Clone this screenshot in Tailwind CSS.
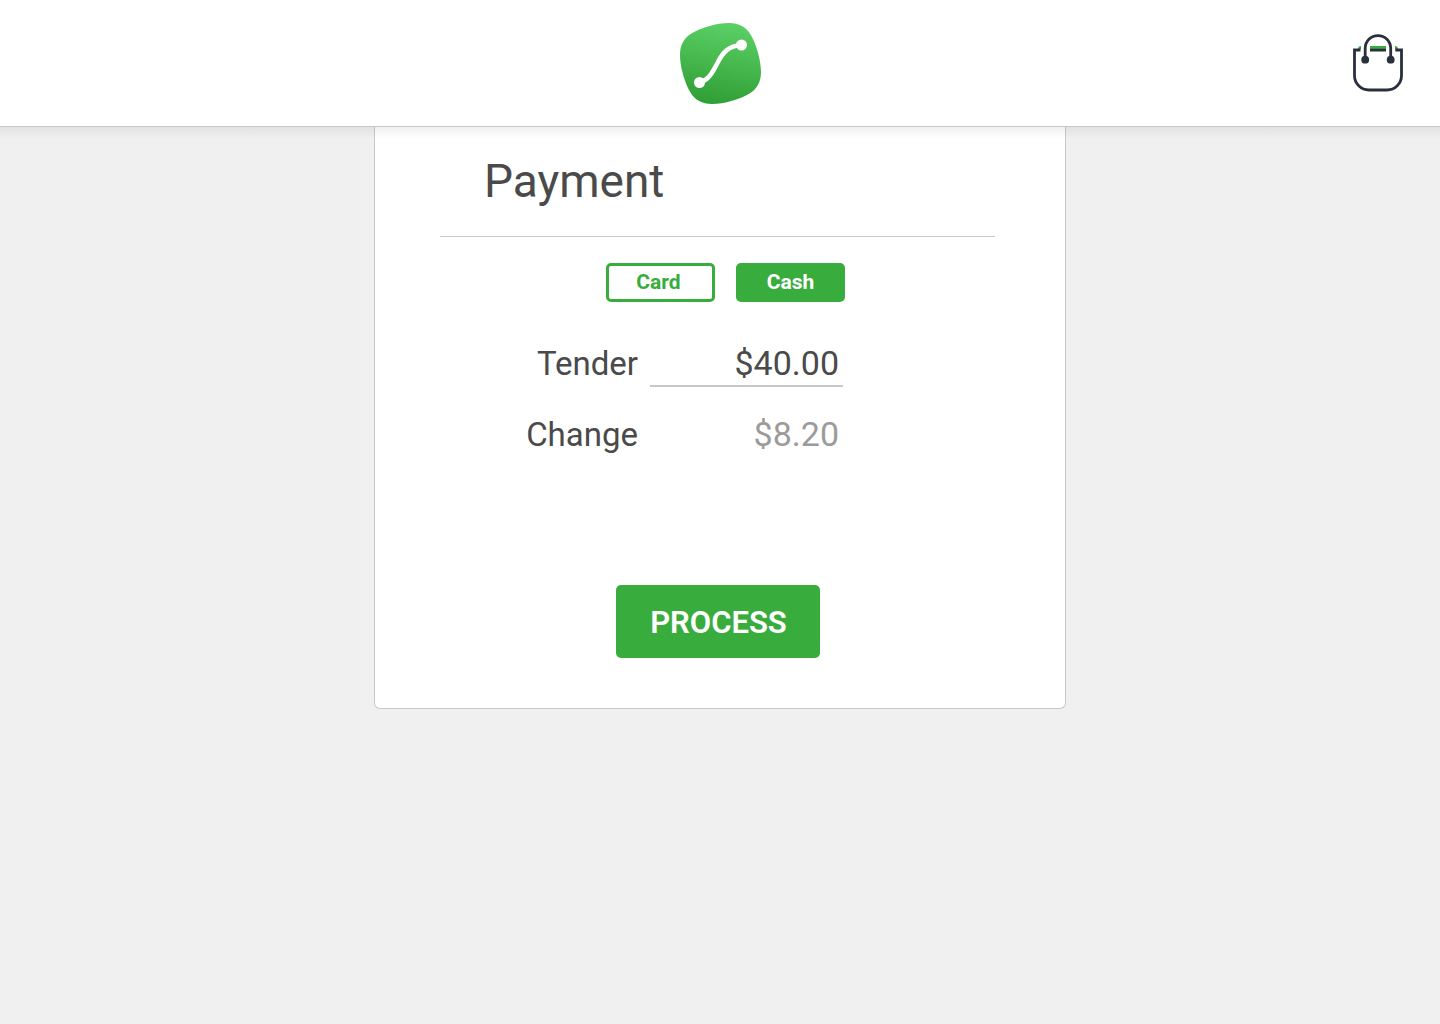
<!DOCTYPE html>
<html lang="en">
<head>
<meta charset="utf-8">
<meta name="viewport" content="width=device-width, initial-scale=1">
<title>Payment</title>
<script src="https://cdn.jsdelivr.net/npm/@tailwindcss/browser@4"></script>
</head>
<body class="min-h-screen bg-[#f0f0f0] font-[Roboto,sans-serif] text-[#4a4a4a]">
  <header class="sticky top-0 z-10 grid h-[127px] grid-cols-3 items-center border-b border-[#c8c8c8] bg-white px-[37px]">
    <a href="#" aria-label="Home" class="col-start-2 justify-self-center">
      <svg width="82" height="82" viewBox="-1 -1 82 82" fill="none" aria-hidden="true">
        <defs>
          <linearGradient id="leaf" x1="48" y1="0" x2="34" y2="81" gradientUnits="userSpaceOnUse">
            <stop stop-color="#5bd066"/>
            <stop offset="1" stop-color="#309f35"/>
          </linearGradient>
        </defs>
        <path fill="url(#leaf)" d="M11.500 10.500C20 5 37 0 49 0C59 0 66 4 70.500 11.500C76 20 81 37 81 49C81 59 77 66 69.500 70.500C61 76 44 81 32 81C22 81 15 77 10.500 69.500C5 61 0 44 0 32C0 22 4 15 11.500 10.500Z"/>
        <path d="M19.500 59.500C30 57 34 46 38 39C43 29 49 23 61 22" stroke="#fff" stroke-width="4.500"/>
        <circle cx="19.500" cy="59.500" r="5.500" fill="#fff"/>
        <circle cx="61.500" cy="22" r="5.500" fill="#fff"/>
      </svg>
    </a>
    <button type="button" aria-label="Shopping bag" class="justify-self-end">
      <svg width="50" height="58" viewBox="0 0 50 58" fill="none" aria-hidden="true">
        <path d="M5 15a3 3 0 0 1 3-3v3zM17 12h16v3H17zM42 12a3 3 0 0 1 3 3h-3z" fill="#39ac3e"/>
        <path d="M7.500 16H1.500V41.500A14.500 14.500 0 0 0 16 56H34A14.500 14.500 0 0 0 48.500 41.500V16H42.300M17 16.200H33" stroke="#2a303b" stroke-width="2.800"/>
        <path d="M12.200 25.700V14.300A12.750 12.750 0 0 1 37.700 14.300V25.700" stroke="#2a303b" stroke-width="2.800"/>
        <circle cx="12.200" cy="25.700" r="3.900" fill="#2a303b"/>
        <circle cx="37.700" cy="25.700" r="3.900" fill="#2a303b"/>
      </svg>
    </button>
    <div class="pointer-events-none absolute inset-x-0 top-full mt-px h-3 bg-linear-to-b from-black/6 to-transparent"></div>
  </header>

  <main class="mx-auto w-full max-w-[692px] rounded-b-md border border-t-0 border-[#c8c8c8] bg-white pt-[26px] pr-[70px] pb-[50px] pl-[65px]">
    <h1 class="border-b border-[#c8c8c8] pb-[27px] pl-11 text-[46px] leading-[56px]">Payment</h1>
    <form>
      <div class="max-w-[405px]">
        <div class="mt-[26px] flex justify-end gap-[21px]">
          <button type="button" class="h-[39px] w-[109px] rounded-[5px] border-3 border-[#39ac3e] bg-white pr-1 pb-0.5 text-[21px] leading-6 font-bold text-[#39ac3e]">Card</button>
          <button type="button" aria-pressed="true" class="h-[39px] w-[109px] rounded-[5px] border-3 border-[#39ac3e] bg-[#39ac3e] pb-0.5 text-[21px] leading-6 font-bold text-white">Cash</button>
        </div>
        <div class="mt-[41px] grid grid-cols-[198px_193px] gap-x-3 gap-y-[27px] leading-[42px]">
          <label for="tender" class="text-right text-[33px]">Tender</label>
          <input id="tender" type="text" inputmode="decimal" value="$40.00" class="h-11 w-full border-b-2 border-[#c8c8c8] pr-1 pb-0.5 text-right text-[34px] leading-10 outline-none">
          <label for="change" class="text-right text-[33px]">Change</label>
          <output id="change" class="pr-1 text-right text-[34px] leading-10 text-[#9b9b9b]">$8.20</output>
        </div>
      </div>
      <button type="submit" class="mx-auto mt-[129px] block h-[73px] w-[204px] rounded-[5px] bg-[#39ac3e] pt-1 pl-0.5 text-[31px] font-semibold text-white">PROCESS</button>
    </form>
  </main>
</body>
</html>
